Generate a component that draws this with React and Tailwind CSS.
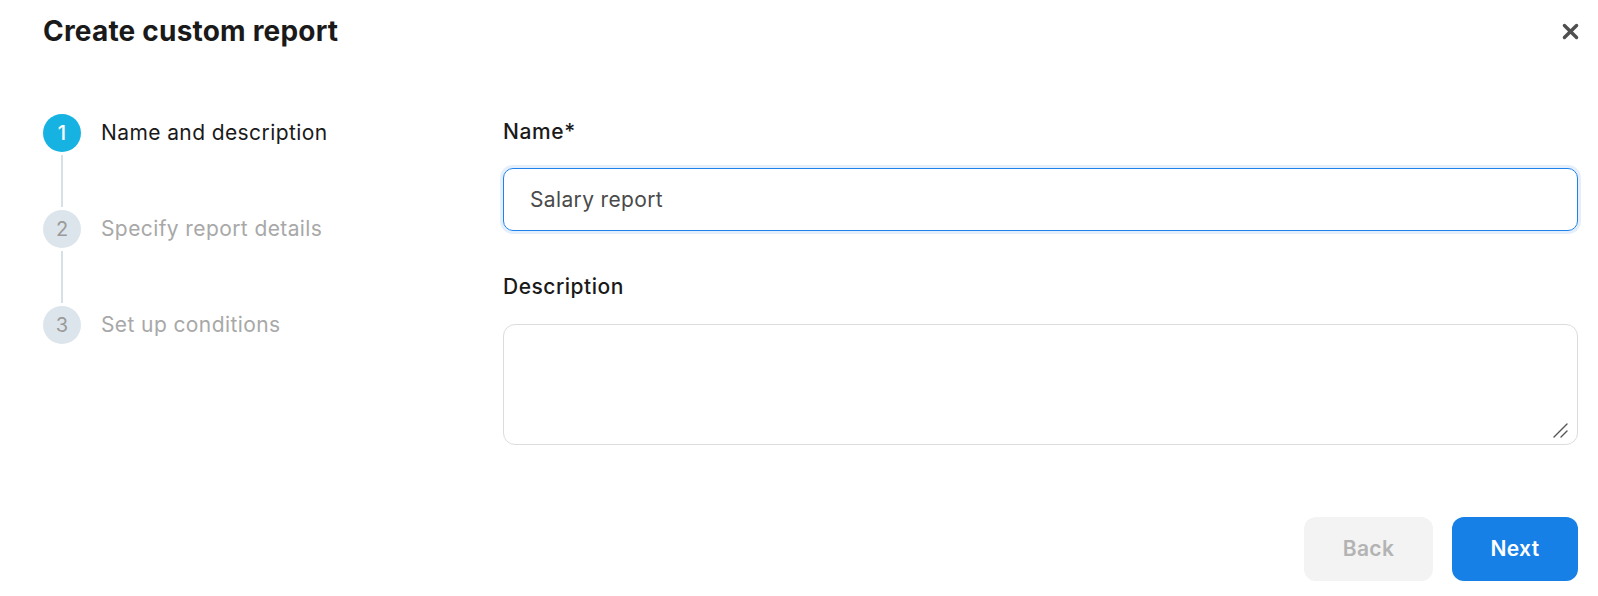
import React, { useState } from "react";

const steps = [
  { num: 1, label: "Name and description" },
  { num: 2, label: "Specify report details" },
  { num: 3, label: "Set up conditions" },
];

const Stepper = ({ current }) => {
  return (
    <div className="flex flex-col">
      {steps.map((step, i) => {
        const active = step.num === current;
        return (
          <div key={step.num} className="flex flex-col">
            <div className="flex items-center gap-[20px]">
              <div
                className={
                  active
                    ? "w-[38px] h-[38px] rounded-full bg-[#16b3e2] text-white flex items-center justify-center text-[20px] font-medium"
                    : "w-[38px] h-[38px] rounded-full bg-[#dde5ec] text-[#9a9a9a] flex items-center justify-center text-[20px]"
                }
              >
                {step.num}
              </div>
              <div
                className={
                  active
                    ? "text-[21px] leading-[28px] tracking-[0.4px] text-[#1a1a1a]"
                    : "text-[21px] leading-[28px] tracking-[0.4px] text-[#a8a8a8]"
                }
              >
                {step.label}
              </div>
            </div>
            {i < steps.length - 1 && (
              <div className="w-[38px] flex justify-center py-[3px]">
                <div className="w-[2px] h-[52px] bg-[#d6e0e7]"></div>
              </div>
            )}
          </div>
        );
      })}
    </div>
  );
};

export default function App() {
  const [name, setName] = useState("Salary report");
  const [description, setDescription] = useState("");

  return (
    <div
      className="w-full h-[596px] bg-white pl-[43px] pr-[20px] flex flex-col"
      style={{ fontFamily: "Inter, 'Noto Sans', sans-serif" }}
    >
      <div className="flex justify-between items-center pt-[14px]">
        <h1 className="text-[28px] leading-[34px] font-bold text-[#1a1a1a] tracking-[0.2px]">
          Create custom report
        </h1>
        <button type="button" className="w-[20px] h-[20px] flex items-center justify-center mr-[-2px]">
          <svg width="17" height="17" viewBox="0 0 14 14" fill="none">
            <path
              d="M2 2l10 10M12 2L2 12"
              stroke="#4f4f4f"
              strokeWidth="2.8"
              strokeLinecap="round"
            />
          </svg>
        </button>
      </div>

      <div className="flex mt-[66px]">
        <div className="w-[460px] shrink-0">
          <Stepper current={1} />
        </div>

        <div className="flex-1 flex flex-col pt-[4px]">
          <label className="text-[21px] leading-[28px] font-medium tracking-[0.6px] text-[#1a1a1a]">Name*</label>
          <input
            type="text"
            value={name}
            onChange={(e) => setName(e.target.value)}
            className="mt-[22px] h-[63px] w-full rounded-[10px] border border-[#1f82ea] shadow-[0_0_0_3px_#e5effb] px-[26px] text-[21px] tracking-[0.35px] text-[#4a4a4a] focus:outline-none"
          />

          <label className="mt-[42px] text-[21px] leading-[28px] font-medium tracking-[0.5px] text-[#1a1a1a]">Description</label>
          <div className="relative mt-[23px]">
            <textarea
              value={description}
              onChange={(e) => setDescription(e.target.value)}
              className="block h-[121px] w-full rounded-[12px] border border-[#dcdcdc] px-[26px] py-[16px] text-[20px] resize-none focus:outline-none"
            />
            <svg
              className="absolute right-[9px] bottom-[7px]"
              width="16"
              height="15"
              viewBox="0 0 16 15"
              fill="none"
            >
              <path d="M1 14L14 1M8 14L14 8" stroke="#555" strokeWidth="1.4" strokeLinecap="round" />
            </svg>
          </div>

          <div className="flex justify-end gap-[19px] mt-[72px]">
            <button
              type="button"
              disabled
              className="w-[129px] h-[64px] rounded-[12px] bg-[#f3f3f3] text-[#b3b3b3] text-[21px] font-semibold tracking-[0.3px]"
            >
              Back
            </button>
            <button
              type="button"
              className="w-[126px] h-[64px] rounded-[12px] bg-[#1680e6] text-white text-[21px] font-semibold tracking-[0.3px]"
            >
              Next
            </button>
          </div>
        </div>
      </div>
    </div>
  );
}
